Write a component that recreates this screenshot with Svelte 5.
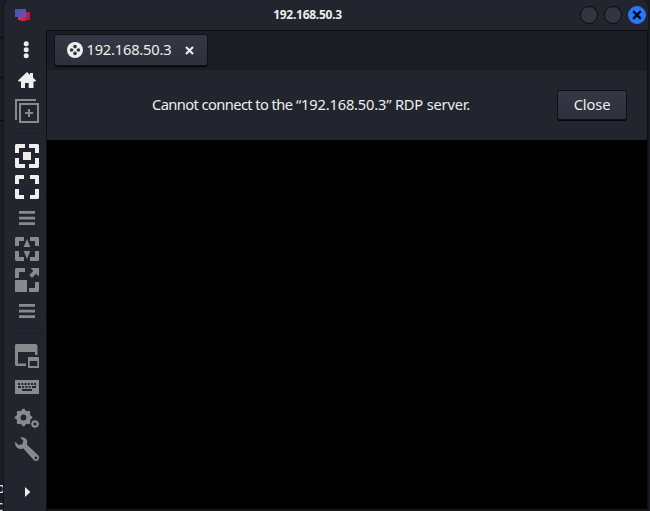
<script>
  const address = '192.168.50.3';
  const groups = [
    ['dots', 'home', 'duplicate'],
    ['fit', 'fullscreen', 'menu', 'dynamic', 'scale', 'menu'],
    ['tabs', 'keyboard', 'gears', 'wrench']
  ];
  const bright = ['dots', 'home', 'fit', 'fullscreen', 'arrow'];
  const fitCorners = 'M0 9V1L1 0H10V4H4V9Z M14 0H23L24 1V9H20V4H14Z M0 14H4V20H10V24H1L0 23Z M20 14H24V23L23 24H14V20H20Z';
  const corners = 'M0 9V1L1 0H9V4H4V9Z M15 0H23L24 1V9H20V4H15Z M0 14H4V20H9V24H1L0 23Z M20 14H24V23L23 24H15V20H20Z';
  const gear = (cx, cy, r, hole) => {
    const pts = [];
    for (let i = 0; i < 32; i++) {
      const a = ((i - 0.5) * Math.PI) / 16;
      const rad = i % 4 < 2 ? r : r * 0.82;
      pts.push(`${(cx + rad * Math.sin(a)).toFixed(2)} ${(cy - rad * Math.cos(a)).toFixed(2)}`);
    }
    return `M${pts.join('L')}Z M${cx - hole} ${cy}a${hole} ${hole} 0 1 0 ${hole * 2} 0a${hole} ${hole} 0 1 0 ${-hole * 2} 0Z`;
  };
</script>

{#snippet icon(name)}
  <svg class="icon" class:bright={bright.includes(name)} viewBox="0 0 24 24" fill="currentColor" fill-rule="evenodd">
    {#if name === 'dots'}
      <circle cx="11.2" cy="6.7" r="2.5" /><circle cx="11.2" cy="12.7" r="2.5" /><circle cx="11.2" cy="18.7" r="2.5" />
    {:else if name === 'home'}
      <path d="M12 4L15 6.8V5H18V9.5L21 12.5L20.5 13.5H18.5V20H13.7V15H10V20H6V13.5H3.8L3 12.5Z" />
    {:else if name === 'duplicate'}
      <path d="M0 0H21V2H2V21H0Z M4 4H24V24H4Z M6 6V22H22V6Z M13 10H15V13H18V15H15V18H13V15H10V13H13Z" />
    {:else if name === 'fit'}
      <path d="{fitCorners} M8 8H16V16H8Z" />
    {:else if name === 'fullscreen'}
      <path d={corners} />
    {:else if name === 'menu'}
      <path d="M4 5H20V7.8H4Z M4 10.7H20V13.4H4Z M4 16.3H20V19H4Z" />
    {:else if name === 'dynamic'}
      <path d="{corners} M12 2L15.3 10H8.7Z M8.7 14H15.3L12 22Z" />
    {:else if name === 'scale'}
      <path d="M0 10V1L1 0H10V4H4V10Z M0 12H12V24H0Z M14 24V20H20V14H24V23L23 24Z M15.5 0H24V8.5L21 5.8L17 9.8L14.3 7L18.3 3Z" />
    {:else if name === 'tabs'}
      <path d="M1 0H21L22.5 1.5V11H20V8H3V19.5H11V22H1L0 21V1Z M13 13H24V24H13Z M14.7 17V22H22.3V17Z" />
    {:else if name === 'keyboard'}
      <path d="M0 5H24V19H0Z M3 8V10H5V8Z M6.3 8V10H8.3V8Z M9.5 8V10H11.5V8Z M12.7 8V10H14.7V8Z M16 8V10H18V8Z M19 8V10H21V8Z M3 11V13H6V11Z M7.2 11V13H9.2V11Z M10.4 11V13H12.4V11Z M13.6 11V13H15.6V11Z M17 11V13H21V11Z M7 14V16H17V14Z" />
    {:else if name === 'gears'}
      <path d={gear(8.5, 11.5, 8.8, 2.9)} /><path d={gear(20, 18, 4.3, 1.6)} />
    {:else if name === 'wrench'}
      <path d="M5.2 .5C8-.5 11.2 1 12 3.8C12.4 5.2 12.2 6.5 11.9 7.7L23.2 18.3C24.4 19.5 24.4 21.6 23.2 22.9C22 24.3 20 24.3 18.7 23L8.4 11.6C5.8 12.7 2.5 12 1 9.3C0 7.5-.1 6 .4 4.7L3.6 8L7.2 7.2L8.4 3.8Z M20.9 19.5a1.4 1.4 0 1 0 .02 0Z" />
    {:else}
      <path d="M10 7L15.3 12L10 17Z" />
    {/if}
  </svg>
{/snippet}

<div class="desktop">
  <div class="backdrop"><i></i><i></i><i></i><span>p<br />c</span></div>
  <div class="window">
    <header>
      <svg class="logo" width="15" height="13" viewBox="0 0 15 13">
        <defs>
          <linearGradient id="blue" x2="1" y2="1"><stop stop-color="#365bb8" /><stop offset="1" stop-color="#8048b4" /></linearGradient>
          <linearGradient id="red"><stop stop-color="#e23a34" /><stop offset="1" stop-color="#ad1746" /></linearGradient>
        </defs>
        <path fill="url(#red)" d="M3 3H15V11H11V12H6V11H3Z" />
        <path fill="url(#blue)" d="M0 0H11V8H8V9H3V8H0Z" />
      </svg>
      <h1>{address}</h1>
      <div class="controls">
        <button aria-label="Minimize"></button>
        <button aria-label="Maximize"></button>
        <button class="quit" aria-label="Close window">
          <svg width="10" height="10" viewBox="0 0 10 10"><path d="M1.2 1.2L8.8 8.8M8.8 1.2L1.2 8.8" stroke="#080c16" stroke-width="2.4" /></svg>
        </button>
      </div>
    </header>
    <div class="body">
      <nav>
        {#each groups as group}
          <div class="group">
            {#each group as name}{@render icon(name)}{/each}
          </div>
        {/each}
        <div class="expand">{@render icon('arrow')}</div>
      </nav>
      <main>
        <div class="tabbar">
          <div class="tab">
            <svg width="16" height="16" viewBox="0 0 16 16">
              <circle cx="8" cy="8" r="8" fill="#eeeeec" />
              <g fill="#303440"><circle cx="8" cy="4.6" r="1.8" /><circle cx="8" cy="11.4" r="1.8" /><circle cx="4.6" cy="8" r="1.8" /><circle cx="11.4" cy="8" r="1.8" /></g>
            </svg>
            <span>{address}</span>
            <svg class="x" width="9" height="9" viewBox="0 0 9 9"><path d="M1 1L8 8M8 1L1 8" stroke="#eeeeec" stroke-width="2.1" /></svg>
          </div>
        </div>
        <div class="infobar">
          <p><span class="lead">Cannot connect to the</span> “{address}” RDP server.</p>
          <button>Close</button>
        </div>
        <div class="screen"></div>
      </main>
    </div>
  </div>
</div>

<style>
  .desktop {
    position: relative;
    box-sizing: border-box;
    width: 650px;
    height: 511px;
    padding-left: 3px;
    overflow: hidden;
    background: #1b1c25;
    font: 14.67px/20px "Noto Sans", sans-serif;
    color: #eeeeec;
  }
  .backdrop {
    position: absolute;
    left: 0;
    top: 0;
    width: 4px;
    height: 511px;
    overflow: hidden;
  }
  .backdrop i {
    position: absolute;
    left: 0;
    top: 37px;
    width: 4px;
    height: 1px;
    background: #090a0f;
  }
  .backdrop i:nth-child(2) { top: 77px; }
  .backdrop i:nth-child(3) { top: 120px; }
  .backdrop span {
    position: absolute;
    left: -4px;
    top: 478px;
    font-size: 15px;
    line-height: 18px;
  }
  .window {
    position: relative;
    box-sizing: border-box;
    display: flex;
    flex-direction: column;
    width: 646px;
    height: 511px;
    border: 1px solid #12141a;
    border-width: 0 1px 0 1px;
    border-radius: 7px 7px 0 0;
    background: #23252e;
  }
  header {
    display: flex;
    align-items: center;
    box-sizing: border-box;
    height: 30px;
    padding: 0 2px 0 11px;
  }
  h1 {
    flex: 1;
    margin: 0;
    padding-right: 14px;
    text-align: center;
    font-size: 12px;
    line-height: 30px;
    font-weight: 700;
    letter-spacing: -0.27px;
  }
  .controls {
    display: flex;
    gap: 6px;
    margin-left: -19px;
  }
  .controls button {
    box-sizing: border-box;
    display: grid;
    place-items: center;
    width: 18px;
    height: 18px;
    padding: 0;
    border: 1px solid #090b0f;
    border-radius: 50%;
    background: #333640;
  }
  .controls .quit {
    border-color: #2777ff;
    background: #2777ff;
  }
  .body {
    display: flex;
    height: 481px;
  }
  nav {
    width: 42px;
    flex: none;
    display: flex;
    flex-direction: column;
    box-sizing: border-box;
    padding-top: 7px;
  }
  .group {
    display: flex;
    flex-direction: column;
    align-items: center;
    gap: 7px;
    padding: 0 4px 11px 8px;
    margin-bottom: 10px;
    background: linear-gradient(#1e2028, #1e2028) 8px 100% / 31px 1px no-repeat;
  }
  .group:nth-child(3) {
    margin-bottom: 0;
    background: none;
  }
  .expand {
    display: flex;
    justify-content: center;
    padding: 8px 4px 0 8px;
  }
  .icon {
    display: block;
    width: 24px;
    height: 24px;
    overflow: visible;
    color: #898a8d;
  }
  .icon.bright { color: #eeeeec; }
  main {
    flex: 1;
    display: flex;
    flex-direction: column;
    border: solid #0d0f14;
    border-width: 1px 1px 0 1px;
    height: 480px;
  }
  .tabbar {
    box-sizing: border-box;
    height: 39px;
    padding: 3px 7px;
    background: #1a1d24;
    border-bottom: 1px solid #171920;
  }
  .tab {
    box-sizing: border-box;
    display: flex;
    align-items: center;
    width: 154px;
    height: 32px;
    padding: 0 13px 0 12px;
    border: 1px solid #101217;
    border-radius: 3px;
    background: linear-gradient(#353844, #2e313c);
    box-shadow: 0 1px 0 #050609;
  }
  .tab span {
    margin: -3px 0 0 3.5px;
    white-space: nowrap;
    letter-spacing: -0.2px;
  }
  .tab .x { margin-left: auto; }
  .infobar {
    box-sizing: border-box;
    display: flex;
    align-items: center;
    height: 70px;
    padding: 0 20px 1px 105px;
    background: #23252e;
  }
  .infobar p {
    flex: 1;
    margin: -2px 0 0;
    white-space: nowrap;
    letter-spacing: -0.18px;
  }
  .infobar .lead { letter-spacing: -0.58px; }
  .infobar button {
    box-sizing: border-box;
    width: 70px;
    height: 30px;
    padding: 0 0 2px;
    border: 1px solid #101217;
    border-radius: 3px;
    background: linear-gradient(#353844, #2e313c);
    box-shadow: 0 1px 0 #07080b;
    color: #eeeeec;
    font: inherit;
    letter-spacing: -0.1px;
  }
  .screen {
    flex: 1;
    background: #000;
    border-bottom: 2px solid #15161d;
  }
</style>
